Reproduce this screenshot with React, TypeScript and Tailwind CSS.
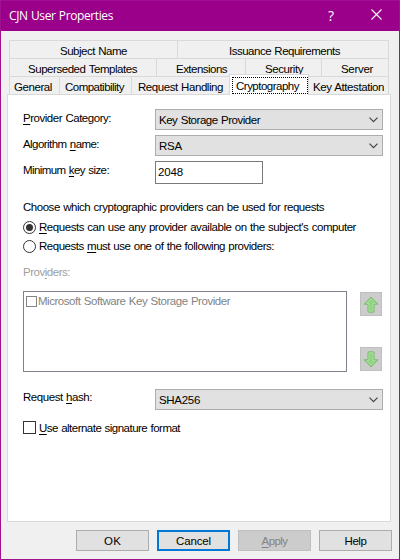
import { useLayoutEffect, useRef, type ReactNode } from "react";
import clsx from "clsx";

/** Text run whose tracking is adjusted so that it occupies the given width. */
function Fit({ w, children, className }: { w: number; children: ReactNode; className?: string }) {
  const ref = useRef<HTMLSpanElement>(null);
  useLayoutEffect(() => {
    const el = ref.current;
    if (!el) return;
    el.style.letterSpacing = "0px";
    const natural = el.getBoundingClientRect().width;
    const count = el.textContent?.length || 1;
    el.style.letterSpacing = `${(w + 1 - natural) / count}px`;
  }, [w]);
  return (
    <span ref={ref} className={clsx("inline-block shrink-0 justify-self-start whitespace-nowrap leading-[14px]", className)}>
      {children}
    </span>
  );
}

function U({ children }: { children: ReactNode }) {
  return <span className="underline decoration-1 underline-offset-[2px]">{children}</span>;
}

function Tab({ className, w, label, pad }: { className: string; w: number; label: string; pad: string }) {
  return (
    <div className={clsx("h-[18px] shrink-0 border-t border-l border-[#d9d9d9] pt-[2px]", className, pad)}>
      <Fit w={w}>{label}</Fit>
    </div>
  );
}

function Combo({ w, value }: { w: number; value: string }) {
  return (
    <div className="flex h-[21px] w-[228px] shrink-0 items-start justify-between border border-[#adadad] bg-[#e1e1e1] pt-[3px] pl-[3px] pr-[4px]">
      <Fit w={w}>{value}</Fit>
      <svg width="9" height="6" viewBox="0 0 9 6" className="mt-[4px]" fill="none" stroke="#444" strokeWidth="1.2">
        <path d="M0.5 0.7 L4.5 4.7 L8.5 0.7" />
      </svg>
    </div>
  );
}

function Radio({ checked }: { checked?: boolean }) {
  return (
    <span className="flex size-[13px] shrink-0 items-center justify-center rounded-full border border-[#333] bg-white">
      {checked && <span className="size-[7px] rounded-full bg-[#333]" />}
    </span>
  );
}

function Arrow({ down }: { down?: boolean }) {
  return (
    <div className="flex h-[24px] w-[22px] items-center justify-center border border-[#bfbfbf] bg-[#cccccc]">
      <svg width="16" height="17" viewBox="0 0 16 17" className={down ? "rotate-180" : ""}>
        <path
          d="M8 1 L14.8 8.2 L11 8.2 L11 15.5 Q11 16.2 10.3 16.2 L5.7 16.2 Q5 16.2 5 15.5 L5 8.2 L1.2 8.2 Z"
          fill="#91d583"
          stroke="#7fb577"
          strokeWidth="1"
          strokeLinejoin="round"
        />
        <path d="M8 2.8 L12.3 7.3 L10 7.3 L10 15.1 L6 15.1 L6 7.3 L3.7 7.3 Z" fill="none" stroke="#a9e39b" strokeWidth="0.8" />
      </svg>
    </div>
  );
}

export default function App() {
  return (
    <div className="flex h-[560px] w-[400px] flex-col overflow-hidden border border-[#a01090] bg-[#f0f0f0] font-['Liberation_Sans',Arial,sans-serif] text-[11.5px] text-black [word-spacing:0.6px]">
      <header className="flex h-[30px] shrink-0 items-start bg-[#9a0089] pl-[8px] text-white">
        <Fit w={103} className="mt-[8px] font-['Open_Sans',sans-serif] text-[12px]">CJN User Properties</Fit>
        <span className="mt-[7px] ml-[215px] font-['Open_Sans',sans-serif] text-[14px] leading-[15px]">?</span>
        <svg width="11" height="11" viewBox="0 0 11 11" className="mt-[8px] ml-auto mr-[17px]" stroke="white" strokeWidth="1.1">
          <path d="M0.5 0.5 L10.5 10.5 M10.5 0.5 L0.5 10.5" />
        </svg>
      </header>

      <nav className="mt-[9px] ml-[8px] h-[54px] w-[380px] shrink-0">
        <div className="flex border-r border-[#d9d9d9]">
          <Tab className="w-[168px]" pad="pl-[50px]" w={66} label="Subject Name" />
          <Tab className="w-[211px]" pad="pl-[51px]" w={110} label="Issuance Requirements" />
        </div>
        <div className="flex border-r border-[#d9d9d9]">
          <Tab className="w-[147px]" pad="pl-[18px]" w={108} label="Superseded Templates" />
          <Tab className="w-[89px]" pad="pl-[19px]" w={50} label="Extensions" />
          <Tab className="w-[76px]" pad="pl-[19px]" w={37} label="Security" />
          <Tab className="w-[67px]" pad="pl-[19px]" w={31} label="Server" />
        </div>
        <div className="flex border-r border-[#d9d9d9]">
          <Tab className="w-[50px]" pad="pl-[4px]" w={37} label="General" />
          <Tab className="w-[72px]" pad="pl-[5px]" w={58} label="Compatibility" />
          <Tab className="w-[98px]" pad="pl-[6px]" w={84} label="Request Handling" />
          <div className="relative z-10 -mt-[2px] h-[21px] w-[80px] shrink-0 border border-b-0 border-[#d9d9d9] bg-white pt-[2px] pl-[2px]">
            <div className="h-[17px] w-[76px] border border-dotted border-black pl-[3px]">
              <Fit w={62} className="-mt-px">Cryptography</Fit>
            </div>
          </div>
          <div className="h-[18px] w-[79px] shrink-0 border-t border-[#d9d9d9] pt-[2px] pl-[4px]">
            <Fit w={70}>Key Attestation</Fit>
          </div>
        </div>
      </nav>

      <main className="ml-[6px] h-[428px] w-[384px] shrink-0 border border-[#d9d9d9] bg-white pt-[14px] pl-[15px]">
        <div className="grid grid-cols-[132px_228px] gap-y-[5px]">
          <Fit w={87} className="mt-[2px]"><U>P</U>rovider Category:</Fit>
          <Combo w={100} value="Key Storage Provider" />
          <Fit w={75} className="mt-[2px]">Algorithm <U>n</U>ame:</Fit>
          <Combo w={22} value="RSA" />
          <Fit w={85} className="mt-[2px]">Minimum <U>k</U>ey size:</Fit>
          <div className="h-[23px] w-[108px] border border-[#7a7a7a] bg-white pt-[2px] pl-[2px]">
            <Fit w={24}>2048</Fit>
          </div>
        </div>

        <div className="mt-[16px] flex"><Fit w={300}>Choose which cryptographic providers can be used for requests</Fit></div>
        <div className="mt-[6px] flex h-[14px] items-center gap-[3px]">
          <Radio checked />
          <Fit w={316}><U>R</U>equests can use any provider available on the subject's computer</Fit>
        </div>
        <div className="mt-[5px] flex h-[14px] items-center gap-[3px]">
          <Radio />
          <Fit w={234}>Requests <U>m</U>ust use one of the following providers:</Fit>
        </div>
        <div className="mt-[12px] flex text-[#a0a0a0]"><Fit w={46}>Prov<U>i</U>ders:</Fit></div>

        <div className="mt-[12px] flex">
          <div className="flex h-[81px] w-[324px] items-start border border-[#7f828c] bg-white pt-[2px] pl-[2px] text-[#838383]">
            <span className="mt-[2px] size-[11px] border border-[#838383]" />
            <Fit w={191} className="ml-px">Microsoft Software Key Storage Provider</Fit>
          </div>
          <div className="mt-px ml-[13px] flex h-[79px] flex-col justify-between">
            <Arrow />
            <Arrow down />
          </div>
        </div>

        <div className="mt-[17px] grid grid-cols-[132px_228px]">
          <Fit w={68} className="mt-px">Request <U>h</U>ash:</Fit>
          <Combo w={40} value="SHA256" />
        </div>
        <div className="mt-[11px] flex gap-[3px]">
          <span className="size-[13px] border border-[#333] bg-white" />
          <Fit w={140}><U>U</U>se alternate signature format</Fit>
        </div>
      </main>

      <footer className="mt-[8px] ml-[75px] flex gap-[8px]">
        <div className="flex h-[21px] w-[73px] justify-center border border-[#adadad] bg-[#e1e1e1] pt-[3px]"><Fit w={16}>OK</Fit></div>
        <div className="flex h-[21px] w-[73px] justify-center border-2 border-[#0078d7] bg-[#e1e1e1] pt-[2px]"><Fit w={34}>Cancel</Fit></div>
        <div className="flex h-[21px] w-[73px] justify-center border border-[#bfbfbf] bg-[#cccccc] pt-[3px] text-[#838383]"><Fit w={25}><U>A</U>pply</Fit></div>
        <div className="flex h-[21px] w-[73px] justify-center border border-[#adadad] bg-[#e1e1e1] pt-[3px]"><Fit w={21}>Help</Fit></div>
      </footer>
    </div>
  );
}
